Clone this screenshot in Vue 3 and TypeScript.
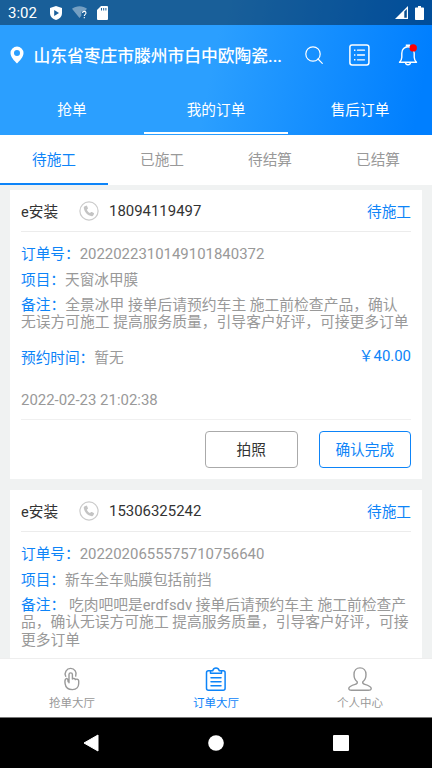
<script setup lang="ts">
import { ref } from 'vue'

interface Order {
  seller: string
  phone: string
  status: string
  orderNo: string
  project: string
  remark: string[]
  appointment?: string
  price?: string
  createdAt?: string
}

const mainTabs: string[] = ['抢单', '我的订单', '售后订单']
const activeMain = ref<number>(1)
const subTabs: string[] = ['待施工', '已施工', '待结算', '已结算']
const activeSub = ref<number>(0)

const orders: Order[] = [
  {
    seller: 'e安装',
    phone: '18094119497',
    status: '待施工',
    orderNo: '2022022310149101840372',
    project: '天窗冰甲膜',
    remark: ['全景冰甲 接单后请预约车主 施工前检查产品，确认', '无误方可施工 提高服务质量，引导客户好评，可接更多订单'],
    appointment: '暂无',
    price: '40.00',
    createdAt: '2022-02-23 21:02:38',
  },
  {
    seller: 'e安装',
    phone: '15306325242',
    status: '待施工',
    orderNo: '2022020655575710756640',
    project: '新车全车贴膜包括前挡',
    remark: [' 吃肉吧吧是erdfsdv 接单后请预约车主 施工前检查产', '品，确认无误方可施工 提高服务质量，引导客户好评，可接', '更多订单'],
  },
]
</script>

<template>
  <div class="screen">
    <div class="top">
      <div class="status">
        <span class="clock">3:02</span>
        <svg class="s-shield" viewBox="0 0 12 14" width="12" height="14">
          <path d="M6 0 12 2v5c0 3.400-2.500 6-6 7-3.500-1-6-3.600-6-7V2z" fill="#fff" />
          <path d="M4.200 4v6l4.800-3z" fill="#1b609b" />
        </svg>
        <svg class="s-wifi" viewBox="0 0 16 13" width="16" height="13">
          <path d="M0 2.800C4-.6 11-.6 15 2.800L12.800 5.400H9.400v4.200L7.500 12z" fill="#fff" opacity=".4" />
          <path d="M10.600 7c0-2.200 3.400-2.100 3.400 0 0 1.300-1.700 1.400-1.700 3M12.300 11v1.300" fill="none" stroke="#fff" stroke-width="1.100" />
        </svg>
        <svg class="s-card" viewBox="0 0 11 14" width="11" height="14">
          <path d="M4 0h6a1 1 0 0 1 1 1v12a1 1 0 0 1-1 1H1a1 1 0 0 1-1-1V4z" fill="#fff" />
          <path d="M4.500 2v2.500M6.700 2v2.500M8.900 2v2.500" stroke="#1b609b" stroke-width="1" />
        </svg>
        <svg class="s-signal" viewBox="0 0 13 13" width="13" height="13">
          <path d="M0 13 13 0v13z" fill="#fff" />
          <path d="M9.300 5.500 11.800 3v8.800H9.300z" fill="#0b4f8e" />
        </svg>
        <svg class="s-battery" viewBox="0 0 9 14" width="9" height="14">
          <path d="M3 0h3v1.500h2.200q.8 0 .8.800v10.900q0 .8-.8.800H.8q-.8 0-.8-.8V2.300q0-.8.800-.8H3z" fill="#fff" />
        </svg>
      </div>

      <div class="location">
        <svg class="pin" viewBox="0 0 14 18" width="14" height="18">
          <path fill-rule="evenodd" d="M7 .5a6.500 6.500 0 0 1 6.500 6.500C13.500 11 9.500 15 7 17.500 4.500 15 .5 11 .5 7A6.500 6.500 0 0 1 7 .5zm0 3.400a3 3 0 1 0 0 6 3 3 0 0 0 0-6z" fill="#fff" />
        </svg>
        <span class="address">山东省枣庄市滕州市白中欧陶瓷...</span>
        <svg class="search" viewBox="0 0 18 18" width="18" height="18" fill="none" stroke="#fff" stroke-width="1.200">
          <circle cx="8" cy="8" r="7.200" />
          <path d="m13 13 4.300 4.300" stroke-linecap="round" />
        </svg>
        <svg class="list" viewBox="0 0 21 22" width="21" height="22" fill="none" stroke="#fff">
          <rect x=".9" y=".9" width="19" height="20" rx="2.200" stroke-width="1.500" />
          <path d="M8.500 6.200h7M8.500 11h7M8.500 15.800h7" stroke-width="1.300" stroke-linecap="round" />
          <path d="M5 6.200h1.400M5 11h1.400M5 15.800h1.400" stroke-width="1.500" />
        </svg>
        <svg class="bell" viewBox="0 0 20 22" width="20" height="22" fill="none" stroke="#fff" stroke-width="1.400">
          <path d="M1.500 18.300h17c-1.600-1.600-2.300-2.900-2.300-5V9.200C16.200 5.500 13.500 2.700 10 2.700S3.800 5.500 3.800 9.200v4.100c0 2.100-.7 3.400-2.300 5z" stroke-linejoin="round" />
          <path d="M8.500 2.500V1.300h3v1.200M7.500 18.500c.3 3 4.700 3 5 0" />
          <circle cx="15.200" cy="3.900" r="3.700" fill="#f00" stroke="none" />
        </svg>
      </div>

      <nav class="main-tabs">
        <button v-for="(t, i) in mainTabs" :key="t" class="main-tab" :class="{ active: i === activeMain }" @click="activeMain = i">{{ t }}</button>
      </nav>
    </div>

    <nav class="sub-tabs">
      <button v-for="(t, i) in subTabs" :key="t" class="sub-tab" :class="{ active: i === activeSub }" @click="activeSub = i">{{ t }}</button>
    </nav>

    <main class="orders">
      <article v-for="o in orders" :key="o.orderNo" class="card">
        <header class="card-head">
          <span class="seller">{{ o.seller }}</span>
          <svg class="phone-icon" viewBox="0 0 20 20" width="20" height="20">
            <circle cx="10" cy="10" r="9.100" fill="none" stroke="#cbcbcb" stroke-width="1.200" />
            <path d="M5.300 5.600 7 4.700c.5-.2.800 0 1 .4l.9 1.900c.2.500.1.800-.3 1.100l-.8.700c.7 1.500 1.700 2.600 3.200 3.300l.8-.8c.3-.3.700-.4 1.100-.2l1.800 1c.4.200.5.600.3 1l-.8 1.500c-.3.500-.8.700-1.400.600C8.600 14.500 5.500 11.300 4.800 7c-.1-.6 0-1.100.5-1.400z" fill="#c4c4c4" />
          </svg>
          <span class="phone num">{{ o.phone }}</span>
          <span class="state">{{ o.status }}</span>
        </header>
        <div class="row first"><b>订单号：</b><span class="num">{{ o.orderNo }}</span></div>
        <div class="row"><b>项目：</b>{{ o.project }}</div>
        <div class="remark">
          <div v-for="(line, i) in o.remark" :key="i" class="line"><b v-if="i === 0">备注：</b><span>{{ line }}</span></div>
        </div>
        <div v-if="o.price" class="meet">
          <span><b>预约时间：</b>{{ o.appointment }}</span>
          <span class="price">￥<span class="num">{{ o.price }}</span></span>
        </div>
        <div v-if="o.createdAt" class="date num">{{ o.createdAt }}</div>
        <footer v-if="o.createdAt" class="actions">
          <button class="btn">拍照</button>
          <button class="btn primary">确认完成</button>
        </footer>
      </article>
    </main>

    <nav class="bottom">
      <div class="item">
        <svg viewBox="0 0 24 24" width="24" height="24" fill="none" stroke="#999" stroke-width="1.400" stroke-linecap="round" stroke-linejoin="round">
          <path d="M5.700 9.300a5.500 5.500 0 1 1 10-.2" />
          <path d="M9 15.800V7.600a1.700 1.700 0 0 1 3.400 0v4.500c.3-.9 2.800-.9 3 .5.400-.8 3.200-.6 3.300 1.200v2.800c0 3.300-2.200 6-6.200 6s-6.900-2.300-7.400-6c-.4-2.400-.1-4.200.8-4.800 1-.7 1.900.2 2 1.200l.2 1.600" />
        </svg>
        <span>抢单大厅</span>
      </div>
      <div class="item active">
        <svg viewBox="0 0 24 24" width="24" height="24" fill="none" stroke="#0d84f8" stroke-width="1.500" stroke-linejoin="round">
          <path d="M6.500 3.800H4.500a2 2 0 0 0-2 2v15.400a2 2 0 0 0 2 2h14.600a2 2 0 0 0 2-2V5.800a2 2 0 0 0-2-2h-1.700" />
          <path d="M6.500 6.200V3.700h2.200C9.300 1.900 10.300 1.100 12 1.100s2.700.8 3.300 2.600h2.200v2.500z" />
          <path d="M7 10.700h10M7 14.700h10M7 18.700h10" stroke-linecap="round" />
        </svg>
        <span>订单大厅</span>
      </div>
      <div class="item">
        <svg viewBox="0 0 24 24" width="24" height="24" fill="none" stroke="#999" stroke-width="1.400" stroke-linejoin="round">
          <path d="M12 .9c3.600 0 6 2.700 6 6.600 0 3.200-1.300 5.800-3.200 7.200-.4 1.400.3 2.200 2 2.700 3.600 1.100 6.200 2 6.400 4 .1 1.500-1.200 1.800-2.700 1.800h-17c-1.500 0-2.800-.3-2.700-1.800.2-2 2.800-2.900 6.400-4 1.700-.5 2.400-1.300 2-2.700C7.300 13.300 6 10.700 6 7.500 6 3.600 8.400.9 12 .9z" />
        </svg>
        <span>个人中心</span>
      </div>
    </nav>

    <div class="system">
      <svg viewBox="0 0 16 18" width="16" height="18"><path d="M15 1v16L1 9z" fill="#fff" stroke="#fff" stroke-linejoin="round" /></svg>
      <svg viewBox="0 0 16 16" width="16" height="16"><circle cx="8" cy="8" r="7.800" fill="#fff" /></svg>
      <svg viewBox="0 0 16 16" width="16" height="16"><rect width="16" height="16" rx="1" fill="#fff" /></svg>
    </div>
  </div>
</template>

<style>
body {
  margin: 0;
  overflow: hidden;
}
</style>

<style scoped>
.screen {
  width: 432px;
  height: 768px;
  display: flex;
  flex-direction: column;
  overflow: hidden;
  background: #f0f2f2;
  font-family: Roboto, "Noto Sans CJK SC", sans-serif;
  font-size: 14.67px;
  color: #333;
}
* {
  box-sizing: border-box;
}
svg {
  display: block;
  flex: none;
}
button {
  font: inherit;
  background: none;
  border: 0;
  padding: 0;
  margin: 0;
}
b {
  font-weight: 400;
  color: #0d84f8;
}
.num {
  font-size: 14.95px;
}
.top {
  flex: none;
  height: 134.500px;
  background: linear-gradient(101deg, #2b9fff 0%, #2b9fff 49%, #007fff 96%);
  color: #fff;
}
.status {
  height: 25px;
  padding: 0 8px;
  display: flex;
  align-items: center;
  background: rgba(0, 0, 0, 0.4);
}
.clock {
  width: 42px;
  font-size: 15px;
  line-height: 25px;
  padding-top: 2px;
}
.s-wifi {
  margin-left: 10px;
}
.s-card {
  margin-left: 9px;
}
.s-signal {
  margin-left: auto;
}
.s-battery {
  margin-left: 7px;
}
.location {
  height: 59px;
  display: flex;
  align-items: center;
  padding-left: 10px;
}
.address {
  width: 254px;
  margin-left: 9.500px;
  font-size: 16.75px;
  font-weight: 500;
  white-space: nowrap;
}
.search {
  margin-left: 17px;
}
.list {
  margin-left: 26.500px;
}
.bell {
  margin-left: 27.500px;
}
.main-tabs {
  height: 50px;
  display: flex;
}
.main-tab {
  flex: 1;
  color: #fff;
  height: 50px;
  border-bottom: 2px solid transparent;
}
.main-tab.active {
  border-bottom-color: #fff;
}
.sub-tabs {
  flex: none;
  height: 50.500px;
  display: flex;
  background: #fff;
}
.sub-tab {
  flex: 1;
  color: #999;
  border-bottom: 2px solid transparent;
}
.sub-tab.active {
  color: #0d84f8;
  border-bottom-color: #0d84f8;
}
.orders {
  flex: 1;
  min-height: 0;
  overflow: hidden;
  padding: 5px 10.400px 0;
}
.card {
  height: 288.500px;
  margin-bottom: 11.500px;
  padding: 0 10.600px;
  background: #fff;
  color: #999;
}
.card-head {
  height: 42px;
  display: flex;
  align-items: center;
  border-bottom: 1px solid #ececec;
  color: #333;
}
.seller {
  width: 58px;
}
.phone {
  margin-left: 10px;
}
.state {
  margin-left: auto;
  color: #0d84f8;
}
.row {
  height: 25.500px;
  line-height: 25.500px;
}
.row.first {
  margin-top: 10px;
}
.remark {
  margin-top: 4px;
  font-size: 14.78px;
  white-space: pre;
}
.line {
  display: flex;
  height: 17.300px;
  line-height: 17.300px;
}
.meet {
  display: flex;
  justify-content: space-between;
  margin-top: 13.500px;
  line-height: 26px;
}
.price {
  color: #0d84f8;
  margin-top: -2.500px;
}
.date {
  margin-top: 18.500px;
  line-height: 21px;
}
.actions {
  margin-top: 8.500px;
  padding-top: 10.500px;
  display: flex;
  justify-content: flex-end;
  gap: 21px;
  border-top: 1px solid #f0f0f0;
}
.btn {
  width: 92.500px;
  height: 37px;
  padding-bottom: 2px;
  border: 1px solid #aaa;
  border-radius: 4px;
  color: #333;
}
.btn.primary {
  border-color: #0d84f8;
  color: #0d84f8;
}
.bottom {
  flex: none;
  height: 59px;
  display: flex;
  background: #fff;
  border-top: 1px solid #eee;
}
.item {
  flex: 1;
  display: flex;
  flex-direction: column;
  align-items: center;
  padding-top: 8px;
  font-size: 11.5px;
  line-height: 16px;
  color: #999;
}
.item span {
  margin-top: 4px;
}
.item.active {
  color: #0d84f8;
}
.system {
  flex: none;
  height: 51px;
  display: flex;
  align-items: center;
  justify-content: center;
  gap: 109px;
  background: #000;
  border-top: 1px solid #777;
}
</style>
